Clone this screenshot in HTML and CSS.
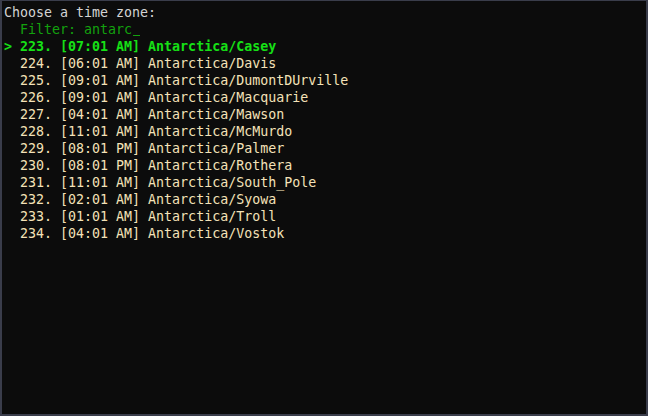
FILE: index.html
```html
<!DOCTYPE html>
<html>
<head>
<meta charset="utf-8">
<link rel="stylesheet" href="styles.css">
</head>
<body>
<div class="term">
<div class="line title">Choose a time zone:</div>
<div class="line filter">  Filter: antarc<span class="cursor"></span></div>
<div class="line sel">&gt; 223. [07:01 AM] Antarctica/Casey</div>
<div class="line item">  224. [06:01 AM] Antarctica/Davis</div>
<div class="line item">  225. [09:01 AM] Antarctica/DumontDUrville</div>
<div class="line item">  226. [09:01 AM] Antarctica/Macquarie</div>
<div class="line item">  227. [04:01 AM] Antarctica/Mawson</div>
<div class="line item">  228. [11:01 AM] Antarctica/McMurdo</div>
<div class="line item">  229. [08:01 PM] Antarctica/Palmer</div>
<div class="line item">  230. [08:01 PM] Antarctica/Rothera</div>
<div class="line item">  231. [11:01 AM] Antarctica/South_Pole</div>
<div class="line item">  232. [02:01 AM] Antarctica/Syowa</div>
<div class="line item">  233. [01:01 AM] Antarctica/Troll</div>
<div class="line item">  234. [04:01 AM] Antarctica/Vostok</div>
</div>
</body>
</html>
```
FILE: styles.css
```css
html, body {
  margin: 0;
  padding: 0;
  background: #0c0c0c;
}
.term {
  box-sizing: border-box;
  width: 648px;
  height: 416px;
  border: 2px solid #3a3d4b;
  border-top-width: 1px;
  background: #0c0c0c;
  padding: 3px 0 0 2px;
  font-family: "DejaVu Sans Mono", monospace;
  font-size: 13.3px;
  line-height: 17px;
}
.line {
  white-space: pre;
}
.title { color: #d4d4d4; }
.filter { color: #13a10e; }
.cursor {
  display: inline-block;
  width: 7px;
  height: 1px;
  margin-left: 1px;
  background: #13a10e;
  vertical-align: -2px;
}
.sel { color: #16e016; font-weight: bold; }
.item { color: #f4e2b8; }
```
